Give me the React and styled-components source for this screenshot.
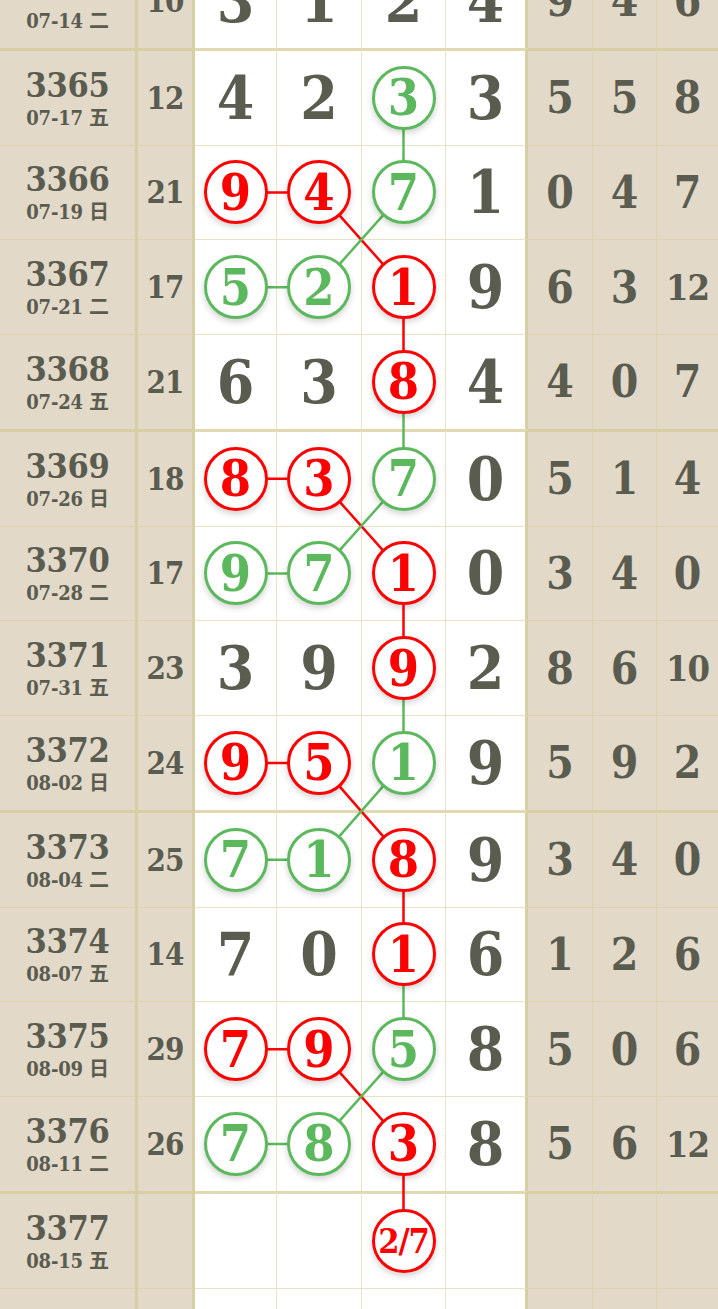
import React from "react";
import styled, { createGlobalStyle } from "styled-components";

const GlobalStyle = createGlobalStyle`
  html, body {
    margin: 0;
    padding: 0;
    background: #ffffff;
    overflow: hidden;
  }
  body {
    font-family: "DejaVu Serif", "Noto Sans CJK SC", serif;
  }
`;

const ROW_H = 93.75;
const TEXT = "#5a5c50";
const RED = "#ff0000";
const GREEN = "#5cb85c";

const DIGIT_W = [82, 85, 84, 82];
const STAT_W = [65, 64, 61];
const DIGIT_X0 = 195;

// r: red ball, g: green ball, -: plain digit
const rows = [
  { no: "3364", date: "07-14 二", sum: "10", d: ["3", "1", "2", "4"], b: "----", s: ["9", "4", "6"] },
  { no: "3365", date: "07-17 五", sum: "12", d: ["4", "2", "3", "3"], b: "--g-", s: ["5", "5", "8"] },
  { no: "3366", date: "07-19 日", sum: "21", d: ["9", "4", "7", "1"], b: "rrg-", s: ["0", "4", "7"] },
  { no: "3367", date: "07-21 二", sum: "17", d: ["5", "2", "1", "9"], b: "ggr-", s: ["6", "3", "12"] },
  { no: "3368", date: "07-24 五", sum: "21", d: ["6", "3", "8", "4"], b: "--r-", s: ["4", "0", "7"] },
  { no: "3369", date: "07-26 日", sum: "18", d: ["8", "3", "7", "0"], b: "rrg-", s: ["5", "1", "4"] },
  { no: "3370", date: "07-28 二", sum: "17", d: ["9", "7", "1", "0"], b: "ggr-", s: ["3", "4", "0"] },
  { no: "3371", date: "07-31 五", sum: "23", d: ["3", "9", "9", "2"], b: "--r-", s: ["8", "6", "10"] },
  { no: "3372", date: "08-02 日", sum: "24", d: ["9", "5", "1", "9"], b: "rrg-", s: ["5", "9", "2"] },
  { no: "3373", date: "08-04 二", sum: "25", d: ["7", "1", "8", "9"], b: "ggr-", s: ["3", "4", "0"] },
  { no: "3374", date: "08-07 五", sum: "14", d: ["7", "0", "1", "6"], b: "--r-", s: ["1", "2", "6"] },
  { no: "3375", date: "08-09 日", sum: "29", d: ["7", "9", "5", "8"], b: "rrg-", s: ["5", "0", "6"] },
  { no: "3376", date: "08-11 二", sum: "26", d: ["7", "8", "3", "8"], b: "ggr-", s: ["5", "6", "12"] },
  { no: "3377", date: "08-15 五", sum: "", d: ["", "", "2/7", ""], b: "--r-", s: ["", "", ""] },
  { no: "3378", date: "08-18 一", sum: "", d: ["", "", "", ""], b: "----", s: ["", "", ""] },
];

const isThick = (i) => i > 0 && (i - 1) % 4 === 0;

// centres of each row, measured from the top of the table
const rowCentres = (() => {
  let y = 0;
  return rows.map((_, i) => {
    y += isThick(i) ? 3 : 1;
    const c = y + ROW_H / 2;
    y += ROW_H;
    return c;
  });
})();

const colCentre = (c) => {
  let x = DIGIT_X0;
  for (let k = 0; k < c; k++) x += DIGIT_W[k];
  const inner = DIGIT_W[c] - (c === 3 ? 3 : 1);
  return x + inner / 2;
};

const links = [];
[2, 5, 8, 11].forEach((k) => {
  links.push([k - 1, 2, k, 2, GREEN]);
  links.push([k, 0, k, 1, RED]);
  links.push([k, 1, k + 1, 2, RED]);
  links.push([k, 2, k + 1, 1, GREEN]);
  links.push([k + 1, 0, k + 1, 1, GREEN]);
  links.push([k + 1, 2, k + 2, 2, RED]);
});

export default function App() {
  const total = rowCentres[rowCentres.length - 1] + ROW_H / 2;
  return (
    <>
      <GlobalStyle />
      <Table>
        <Links width="718" height={total} viewBox={`0 0 718 ${total}`}>
          {links.map(([r1, c1, r2, c2, color], i) => (
            <line
              key={i}
              x1={colCentre(c1)}
              y1={rowCentres[r1]}
              x2={colCentre(c2)}
              y2={rowCentres[r2]}
              stroke={color}
              strokeWidth="2.5"
            />
          ))}
        </Links>
        {rows.map((row, i) => {
          const thick = isThick(i);
          return (
            <Row key={row.no}>
              <IssueCell $thick={thick}>
                <IssueNo>{row.no}</IssueNo>
                <IssueDate>{row.date}</IssueDate>
              </IssueCell>
              <SumCell $thick={thick}>{row.sum}</SumCell>
              {row.d.map((v, c) => (
                <DigitCell key={c} $w={DIGIT_W[c]} $last={c === 3} $thick={thick}>
                  {row.b[c] === "-" ? (
                    v
                  ) : (
                    <Ball $color={row.b[c] === "r" ? RED : GREEN} $small={v.length > 1}>
                      {v}
                    </Ball>
                  )}
                </DigitCell>
              ))}
              {row.s.map((v, c) => (
                <StatCell key={c} $w={STAT_W[c]} $small={v.length > 1} $thick={thick}>
                  {v}
                </StatCell>
              ))}
            </Row>
          );
        })}
      </Table>
    </>
  );
}

const Table = styled.div`
  position: relative;
  width: 718px;
  margin-top: -47px;
  font-stretch: condensed;
  color: ${TEXT};
  font-weight: 700;
`;

const Links = styled.svg`
  position: absolute;
  left: 0;
  top: 0;
  z-index: 1;
  pointer-events: none;
`;

const Row = styled.div`
  display: flex;
  flex-direction: row;
`;

const BaseCell = styled.div`
  box-sizing: border-box;
  height: ${(p) => ROW_H + (p.$thick ? 3 : 1)}px;
  display: flex;
  align-items: center;
  justify-content: center;
  flex-shrink: 0;
`;

const IssueCell = styled(BaseCell)`
  width: 138px;
  flex-direction: column;
  background: #e2d9c9;
  border-top: ${(p) => (p.$thick ? "3px solid #d8cea3" : "1px solid #ddd3ad")};
  border-right: 3px solid #d8cea3;
  padding-top: 4px;
`;

const IssueNo = styled.div`
  font-size: 34px;
  line-height: 36px;
  letter-spacing: -0.3px;
`;

const IssueDate = styled.div`
  font-size: 20px;
  line-height: 30px;
  letter-spacing: -0.2px;
`;

const SumCell = styled(BaseCell)`
  width: 57px;
  background: #e2d9c9;
  border-top: ${(p) => (p.$thick ? "3px solid #d8cea3" : "1px solid #ddd3ad")};
  border-right: 3px solid #d8cea3;
  font-size: 31px;
  letter-spacing: -1px;
`;

const DigitCell = styled(BaseCell)`
  width: ${(p) => p.$w}px;
  background: #ffffff;
  border-top: ${(p) => (p.$thick ? "3px solid #e2d9b2" : "1px solid #e9e2c6")};
  border-right: ${(p) => (p.$last ? "3px solid #d8cea3" : "1px solid #e9e2c6")};
  font-size: 60px;
`;

const StatCell = styled(BaseCell)`
  width: ${(p) => p.$w}px;
  background: #e2d9c9;
  border-top: ${(p) => (p.$thick ? "3px solid #d8cea3" : "1px solid #ddd3ad")};
  border-right: 1px solid #ddd3ad;
  font-size: ${(p) => (p.$small ? "36px" : "44px")};
  letter-spacing: ${(p) => (p.$small ? "-1px" : "0")};
  &:last-child {
    border-right: none;
  }
`;

const Ball = styled.span`
  position: relative;
  z-index: 2;
  box-sizing: border-box;
  width: 64px;
  height: 64px;
  border-radius: 50%;
  border: 3px solid ${(p) => p.$color};
  background: #ffffff;
  color: ${(p) => p.$color};
  display: flex;
  align-items: center;
  justify-content: center;
  font-size: ${(p) => (p.$small ? "34px" : "50px")};
  letter-spacing: ${(p) => (p.$small ? "-1px" : "0")};
  box-shadow: 0 3px 6px rgba(0, 0, 0, 0.18);
`;
